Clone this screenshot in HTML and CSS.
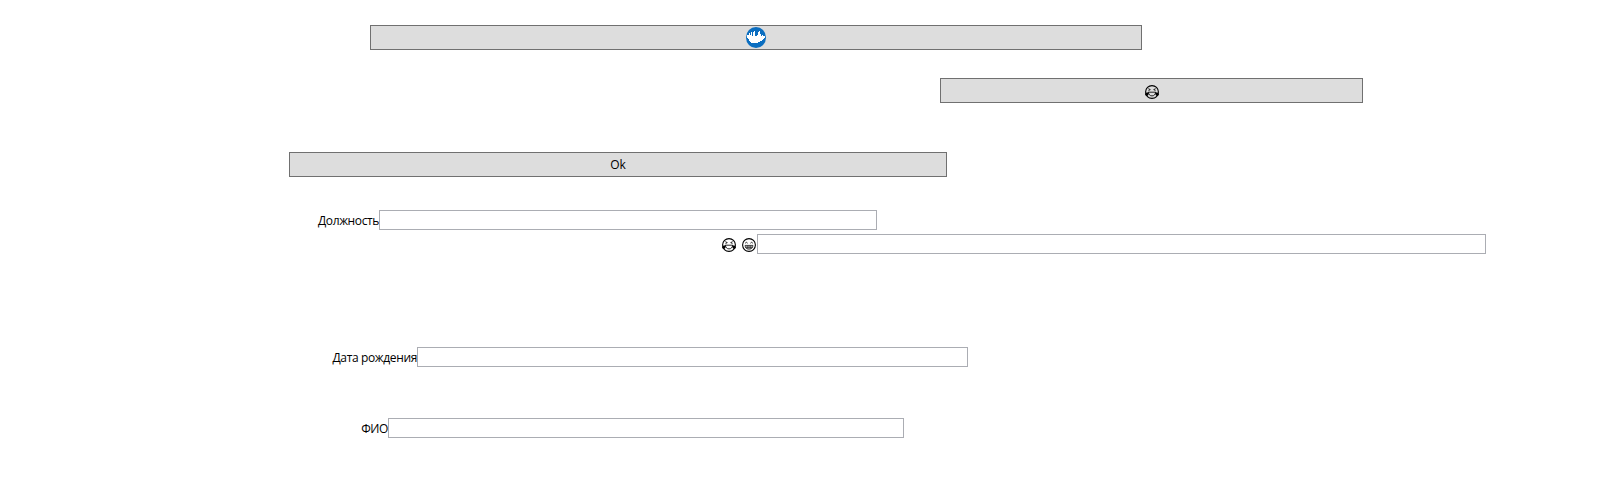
FILE: index.html
```html
<!DOCTYPE html>
<html lang="ru">
<head>
<meta charset="utf-8">
<title>Form</title>
<link rel="stylesheet" href="styles.css">
</head>
<body>
<svg class="defs" width="0" height="0">
  <symbol id="laugh" viewBox="0 0 14 14">
    <circle cx="7" cy="7" r="6.4" fill="none" stroke="#000" stroke-width="1.1"/>
    <path d="M3.3 3.7 5.3 4.6 3.5 5.6M10.7 3.7 8.7 4.6 10.5 5.6" fill="none" stroke="#000" stroke-width=".85"/>
    <path d="M3.4 7.2H10.6C10.4 9.6 9 10.9 7 10.9S3.6 9.6 3.4 7.2Z" fill="none" stroke="#000" stroke-width=".85"/>
    <path d="M3.7 7.2C1.5 7.2 0 8 .1 9.4 .6 11.6 4.2 11.4 3.7 7.2ZM10.3 7.2C12.5 7.2 14 8 13.9 9.4 13.4 11.6 9.8 11.4 10.3 7.2Z"/>
  </symbol>
  <symbol id="grin" viewBox="0 0 14 14">
    <circle cx="7" cy="7" r="6.4" fill="none" stroke="#000" stroke-width="1.1"/>
    <path d="M3.2 5.2Q4.4 3.4 5.6 5.2M8.4 5.2Q9.6 3.4 10.8 5.2" fill="none" stroke="#000" stroke-width=".85"/>
    <path d="M3 7.4H11C10.8 10 9.2 11.2 7 11.2S3.2 10 3 7.4ZM3.3 9.2H10.7M5.2 7.4V11M7 7.4V11M8.8 7.4V11" fill="none" stroke="#000" stroke-width=".7"/>
  </symbol>
</svg>
<main class="form">
  <button class="button button-image" type="button" aria-label="Image">
    <svg class="logo" viewBox="0 0 20 21">
      <ellipse cx="10" cy="10.5" rx="10" ry="10.5" fill="#0b6ec0"/>
      <path d="M2 8H3V6H4V8H5V5H6V9H7V5H8V4H9V9H11V8H12V5H13V4H14V7H15V9H16V8H17V9H19V11H18V12H17V13H16V14H14V15H12V16H5V15H4V14H3V12H2V11H1V8Z" fill="#fff"/>
    </svg>
  </button>
  <button class="button button-emoji" type="button" aria-label="Laugh"><svg class="emoji"><use href="#laugh"/></svg></button>
  <button class="button button-ok" type="button">Ok</button>
  <label class="field field-position"><span class="caption">Должность</span><input class="input" type="text"></label>
  <label class="field field-emoji"><span class="caption"><svg class="emoji"><use href="#laugh"/></svg><svg class="emoji"><use href="#grin"/></svg></span><input class="input" type="text"></label>
  <label class="field field-birth"><span class="caption">Дата рождения</span><input class="input" type="text"></label>
  <label class="field field-name"><span class="caption">ФИО</span><input class="input" type="text"></label>
</main>
</body>
</html>
```
FILE: styles.css
```css
* { box-sizing: border-box; }
body {
  margin: 0;
  background: #fff;
  color: #000;
  font: 12px/16px "Open Sans", "Noto Sans", sans-serif;
}
.defs { position: absolute; }
.form {
  display: flex;
  flex-direction: column;
  align-items: flex-start;
  height: 483px;
  padding-top: 25px;
}
.button {
  display: flex;
  align-items: center;
  justify-content: center;
  height: 25px;
  padding: 0;
  border: 1px solid #707070;
  border-radius: 0;
  background: #ddd;
  color: #000;
  font: inherit;
}
.button-image { width: 772px; margin-left: 370px; }
.button-emoji { width: 423px; margin: 28px 0 0 940px; padding: 2px 0 0 1px; }
.button-ok { width: 658px; margin: 49px 0 0 289px; }
.logo { width: 20px; height: 21px; }
.emoji { width: 14px; height: 14px; }
.field { display: flex; height: 20px; }
.caption {
  display: flex;
  justify-content: flex-end;
  flex: none;
  padding-top: 3px;
  white-space: nowrap;
}
.input {
  flex: 1;
  min-width: 0;
  height: 20px;
  padding: 0 3px;
  border: 1px solid #abadb3;
  border-radius: 0;
  background: #fff;
  font: inherit;
  outline: 0;
}
.field-position { width: 560px; margin: 33px 0 0 317px; }
.field-position .caption { width: 62px; letter-spacing: -0.38px; }
.field-emoji { width: 766px; margin: 4px 0 0 720px; }
.field-emoji .caption { width: 37px; gap: 6px; padding: 4px 1.5px 0 0; }
.field-birth { width: 636px; margin: 93px 0 0 332px; }
.field-birth .caption { width: 85px; letter-spacing: -0.36px; }
.field-name { width: 544px; margin: 51px 0 0 360px; }
.field-name .caption { width: 28px; letter-spacing: -0.4px; }
```
